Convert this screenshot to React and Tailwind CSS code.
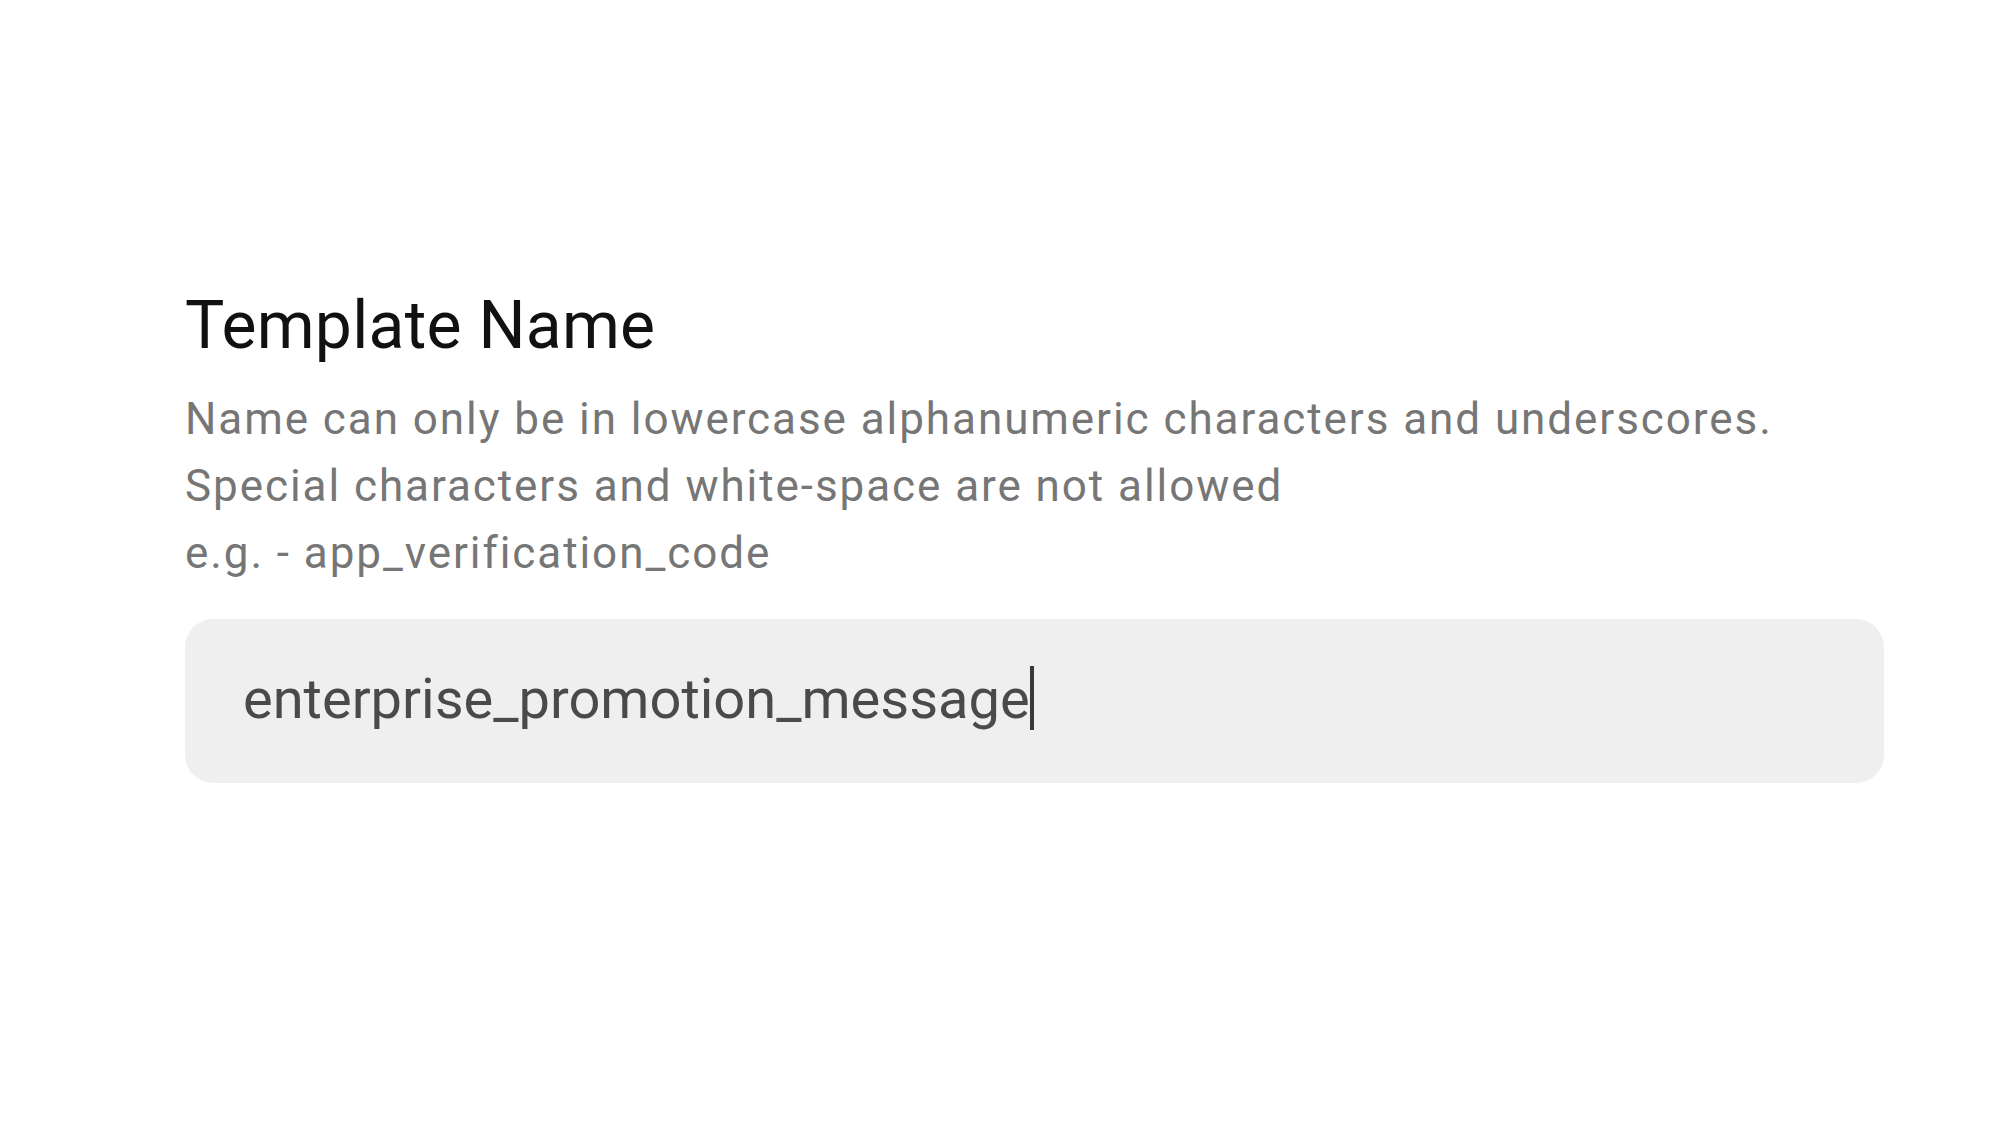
import React from 'react';

export default function App() {
  const value = 'enterprise_promotion_message';

  return (
    <div className="min-h-screen w-full bg-white font-['Roboto',sans-serif]">
      <div className="flex flex-col pl-[185px] pt-[288px]">
        {/* Field label */}
        <h1 className="text-[66px] leading-[76px] tracking-[0.004em] font-normal text-[#111111]">Template Name</h1>

        {/* Helper text */}
        <div className="mt-[22px] text-[44px] leading-[67px] tracking-[0.044em] text-[#767676]">
          <p>Name can only be in lowercase alphanumeric characters and underscores.</p>
          <p>Special characters and white-space are not allowed</p>
          <p>e.g. - app_verification_code</p>
        </div>

        {/* Text field */}
        <div className="mt-[32px] flex h-[164px] w-[1699px] items-center rounded-[28px] bg-[#efefef] pb-[4px] pl-[58px]">
          <span className="text-[56px] leading-[66px] text-[#4a4a4a]">{value}</span>
          <span className="-mt-[2px] h-[64px] w-[4px] bg-[#3a3a3a]" />
        </div>
      </div>
    </div>
  );
}
